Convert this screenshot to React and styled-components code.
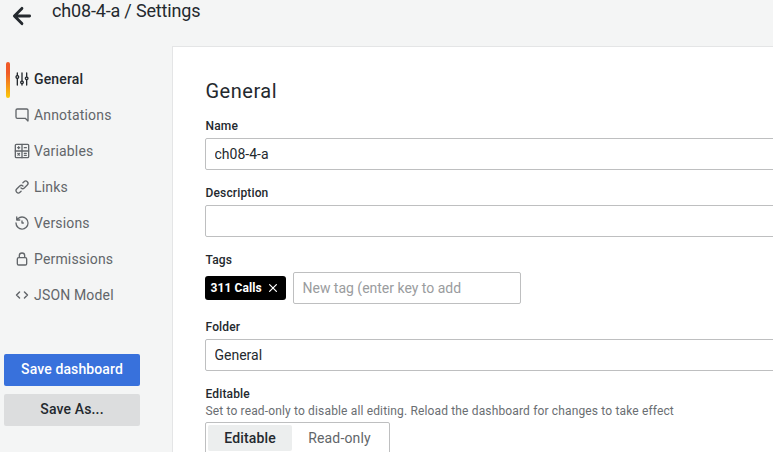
import React from "react";
import styled, { createGlobalStyle, css } from "styled-components";

const GlobalStyle = createGlobalStyle`
  *, *::before, *::after { box-sizing: border-box; }
  html, body { margin: 0; height: 100%; overflow: hidden; }
  body {
    background: #f4f5f5;
    color: #24292e;
    font-family: Roboto, "Liberation Sans", sans-serif;
    font-size: 14px;
    line-height: 22px;
    letter-spacing: 0.15px;
  }
  button, input { font: inherit; letter-spacing: inherit; }
`;

const Page = styled.div`
  display: flex;
  flex-direction: column;
  height: 452px;
  overflow: hidden;
`;

const Header = styled.header`
  display: flex;
  flex: none;
  height: 46px;
  padding-left: 10px;
`;

const BackButton = styled.button`
  display: flex;
  width: 24px;
  height: 24px;
  margin: 4px 0 0;
  padding: 0;
  border: 0;
  background: none;
  color: #24292e;
`;

const PageTitle = styled.h1`
  margin: 0 0 0 18px;
  font-size: 18px;
  font-weight: 400;
  line-height: 22px;
  letter-spacing: -0.17px;
`;

const Body = styled.div`
  display: flex;
  flex: 1;
  min-height: 0;
`;

const Sidebar = styled.aside`
  display: flex;
  flex: none;
  flex-direction: column;
  width: 172px;
  padding: 15px 32px 0 4px;
`;

const NavList = styled.nav`
  display: flex;
  flex-direction: column;
  margin-bottom: 41px;
`;

const NavItem = styled.a`
  position: relative;
  display: flex;
  align-items: center;
  gap: 4px;
  height: 36px;
  padding-left: 10px;
  color: ${(p) => (p.$active ? "#24292e" : "#62666a")};
  font-weight: ${(p) => (p.$active ? 500 : 400)};
  letter-spacing: ${(p) => (p.$active ? "0.15px" : "0.17px")};

  ${(p) =>
    p.$active &&
    css`
      &::before {
        content: "";
        position: absolute;
        left: 2px;
        top: 1px;
        width: 4px;
        height: 36px;
        border-radius: 2px;
        background: linear-gradient(180deg, #f05a28 30%, #fbca0a 99%);
      }
    `}
`;

const Icon = styled.svg`
  display: block;
  flex: none;
  width: ${(p) => p.$size || 16}px;
  height: ${(p) => p.$size || 16}px;
  fill: currentColor;
`;

const LineIcon = styled(Icon)`
  fill: none;
  stroke: currentColor;
  stroke-linecap: round;
  stroke-linejoin: round;
`;

const ActionButton = styled.button`
  height: 32px;
  margin: 0 0 8px;
  padding: 0 0 2px;
  border: 0;
  border-radius: 2px;
  background: ${(p) => (p.$primary ? "#3871dc" : "#dcddde")};
  color: ${(p) => (p.$primary ? "#fff" : "#24292e")};
  font-weight: 500;
  letter-spacing: ${(p) => (p.$primary ? "0.12px" : "0.15px")};
`;

const Panel = styled.main`
  flex: 1;
  min-width: 0;
  padding: 32px 0 0 32px;
  border: solid #e4e5e6;
  border-width: 1px 0 0 1px;
  background: #fff;
`;

const SectionTitle = styled.h3`
  margin: 0 0 15px;
  padding-left: 0.5px;
  font-size: 20px;
  font-weight: 400;
  line-height: 24px;
  letter-spacing: 0.5px;
`;

const Field = styled.div`
  margin-bottom: 15px;
`;

const Label = styled.label`
  display: block;
  height: ${(p) => (p.$compact ? 16 : 20)}px;
  padding-left: 0.5px;
  font-size: 12px;
  font-weight: 500;
  line-height: 16px;
  letter-spacing: 0.15px;
`;

const Hint = styled.div`
  height: 20px;
  padding-left: 0.5px;
  color: #6a6e72;
  font-size: 12px;
  line-height: 18px;
  letter-spacing: 0.15px;
`;

const inputFrame = css`
  height: 32px;
  border: 1px solid #bebfc0;
  border-radius: 2px;
  background: #fff;
  color: #24292e;
`;

const TextInput = styled.input`
  ${inputFrame}
  display: block;
  width: ${(p) => (p.$narrow ? "228px" : "calc(100% + 8px)")};
  padding: 0 8.5px;
  outline: 0;
  letter-spacing: ${(p) => (p.$narrow ? "-0.01px" : "0")};
  &::placeholder { color: #9a9c9e; opacity: 1; }
`;

const Tags = styled.div`
  display: flex;
  align-items: center;
  gap: 7px;
`;

const Tag = styled.span`
  display: flex;
  align-items: center;
  justify-content: space-between;
  width: 81px;
  height: 24px;
  padding: 0 6px 0 5.5px;
  border-radius: 3px;
  background: #000;
  color: #fff;
  font-size: 12px;
  font-weight: 700;
  letter-spacing: 0.1px;
`;

const Segments = styled.div`
  ${inputFrame}
  display: flex;
  width: 185px;
  padding: 2px;
`;

const Segment = styled.button`
  width: ${(p) => (p.$selected ? 84 : 95)}px;
  padding: 0;
  border: 0;
  border-radius: 2px;
  background: ${(p) => (p.$selected ? "#eceeee" : "transparent")};
  color: ${(p) => (p.$selected ? "#24292e" : "#62666a")};
  font-weight: ${(p) => (p.$selected ? 500 : 400)};
`;

const PathIcon = ({ d }) => (
  <Icon viewBox="0 0 24 24"><path d={d} /></Icon>
);

const slidersPath = "M20,8.18V3a1,1,0,0,0-2,0V8.18a3,3,0,0,0,0,5.64V21a1,1,0,0,0,2,0V13.82a3,3,0,0,0,0-5.64ZM19,12a1,1,0,1,1,1-1A1,1,0,0,1,19,12Zm-6,2.18V3a1,1,0,0,0-2,0V14.18a3,3,0,0,0,0,5.64V21a1,1,0,0,0,2,0V19.82a3,3,0,0,0,0-5.64ZM12,18a1,1,0,1,1,1-1A1,1,0,0,1,12,18ZM6,6.18V3A1,1,0,0,0,4,3V6.18a3,3,0,0,0,0,5.64V21a1,1,0,0,0,2,0V11.82A3,3,0,0,0,6,6.18ZM5,10A1,1,0,1,1,6,9,1,1,0,0,1,5,10Z";
const commentPath = "M19,2H5A3,3,0,0,0,2,5V15a3,3,0,0,0,3,3H16.59l3.7,3.71A1,1,0,0,0,21,22a.84.84,0,0,0,.38-.08A1,1,0,0,0,22,21V5A3,3,0,0,0,19,2Zm1,16.59-2.29-2.3A1,1,0,0,0,17,16H5a1,1,0,0,1-1-1V5A1,1,0,0,1,5,4H19a1,1,0,0,1,1,1Z";
const linkPath = "M10,17.55,8.23,19.27a2.47,2.47,0,0,1-3.5-3.5l4.54-4.55a2.46,2.46,0,0,1,3.39-.09l.12.1a1,1,0,0,0,1.4-1.43A2.75,2.75,0,0,0,14,9.59a4.46,4.46,0,0,0-6.09.22L3.31,14.36a4.48,4.48,0,0,0,6.33,6.33L11.37,19A1,1,0,0,0,10,17.55ZM20.69,3.31a4.49,4.49,0,0,0-6.33,0L12.63,5A1,1,0,0,0,14,6.45l1.73-1.72a2.47,2.47,0,0,1,3.5,3.5l-4.54,4.55a2.46,2.46,0,0,1-3.39.09l-.12-.1a1,1,0,0,0-1.4,1.43,2.75,2.75,0,0,0,.23.21,4.47,4.47,0,0,0,6.09-.22l4.55-4.55A4.49,4.49,0,0,0,20.69,3.31Z";
const historyPath = "M12,2A10,10,0,0,0,5.12,4.77V3a1,1,0,0,0-2,0V7.5a1,1,0,0,0,1,1H8.62a1,1,0,0,0,0-2H6.22A8,8,0,1,1,4,12a1,1,0,0,0-2,0A10,10,0,1,0,12,2Zm0,6a1,1,0,0,0-1,1v3a1,1,0,0,0,1,1h2a1,1,0,0,0,0-2H13V9A1,1,0,0,0,12,8Z";
const lockPath = "M17,9V7A5,5,0,0,0,7,7V9a3,3,0,0,0-3,3v7a3,3,0,0,0,3,3H17a3,3,0,0,0,3-3V12A3,3,0,0,0,17,9ZM9,7a3,3,0,0,1,6,0V9H9Zm9,12a1,1,0,0,1-1,1H7a1,1,0,0,1-1-1V12a1,1,0,0,1,1-1H17a1,1,0,0,1,1,1Z";

const VariablesIcon = () => (
  <LineIcon viewBox="0 0 24 24" strokeWidth="2">
    <rect x="2" y="2" width="20" height="20" rx="1.5" />
    <path d="M12 2v20M2 12h20M5.5 7h3M7 5.5v3M15.5 7h3M15.5 15.5h3M15.5 18.5h3M5.8 15.8l2.4 2.4M8.2 15.8l-2.4 2.4" />
  </LineIcon>
);

const CodeIcon = () => (
  <LineIcon viewBox="0 0 24 24" strokeWidth="2.2">
    <path d="M8.3 7.5L3.8 12l4.5 4.5M15.7 7.5l4.5 4.5-4.5 4.5" />
  </LineIcon>
);

const navItems = [
  { label: "General", icon: <PathIcon d={slidersPath} />, active: true },
  { label: "Annotations", icon: <PathIcon d={commentPath} /> },
  { label: "Variables", icon: <VariablesIcon /> },
  { label: "Links", icon: <PathIcon d={linkPath} /> },
  { label: "Versions", icon: <PathIcon d={historyPath} /> },
  { label: "Permissions", icon: <PathIcon d={lockPath} /> },
  { label: "JSON Model", icon: <CodeIcon /> },
];

export default function App() {
  return (
    <>
      <GlobalStyle />
      <Page>
        <Header>
          <BackButton aria-label="Back">
            <LineIcon $size={24} viewBox="0 0 24 24" strokeWidth="2.9">
              <path d="M19.6 12H4.8M11.9 4.4L4.4 12l7.5 7.6" />
            </LineIcon>
          </BackButton>
          <PageTitle>ch08-4-a / Settings</PageTitle>
        </Header>
        <Body>
          <Sidebar>
            <NavList>
              {navItems.map((item) => (
                <NavItem key={item.label} $active={item.active}>
                  {item.icon}
                  <span>{item.label}</span>
                </NavItem>
              ))}
            </NavList>
            <ActionButton $primary>Save dashboard</ActionButton>
            <ActionButton>Save As...</ActionButton>
          </Sidebar>
          <Panel>
            <SectionTitle>General</SectionTitle>
            <Field>
              <Label>Name</Label>
              <TextInput defaultValue="ch08-4-a" />
            </Field>
            <Field>
              <Label>Description</Label>
              <TextInput />
            </Field>
            <Field>
              <Label>Tags</Label>
              <Tags>
                <Tag>
                  311 Calls
                  <LineIcon $size={14} viewBox="0 0 14 14" strokeWidth="1.25">
                    <path d="M3.6 3.6l6.8 6.8M10.4 3.6l-6.8 6.8" />
                  </LineIcon>
                </Tag>
                <TextInput $narrow placeholder="New tag (enter key to add" />
              </Tags>
            </Field>
            <Field>
              <Label>Folder</Label>
              <TextInput defaultValue="General" />
            </Field>
            <Field>
              <Label $compact>Editable</Label>
              <Hint>Set to read-only to disable all editing. Reload the dashboard for changes to take effect</Hint>
              <Segments>
                <Segment $selected>Editable</Segment>
                <Segment>Read-only</Segment>
              </Segments>
            </Field>
          </Panel>
        </Body>
      </Page>
    </>
  );
}
